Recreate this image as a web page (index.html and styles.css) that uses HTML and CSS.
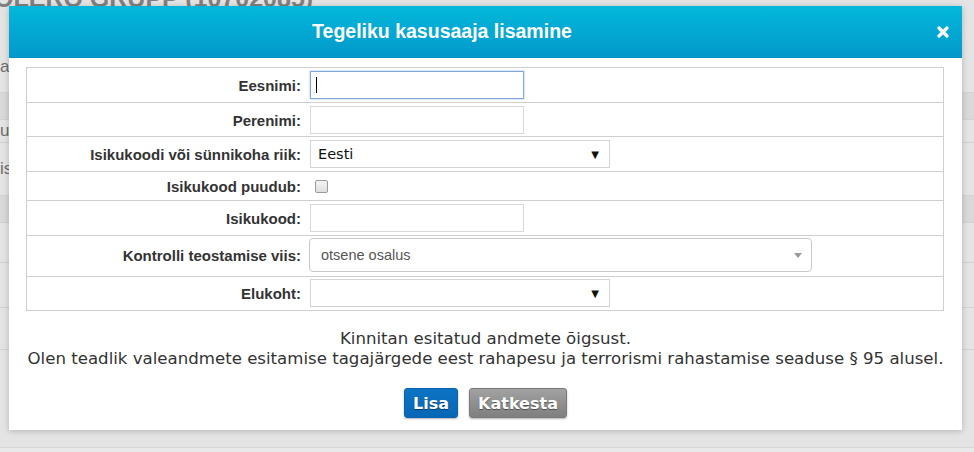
FILE: index.html
```html
<!DOCTYPE html>
<html lang="et">
<head>
<meta charset="utf-8">
<title>Tegeliku kasusaaja lisamine</title>
<link rel="stylesheet" href="styles.css">
</head>
<body>
<div class="page">
  <h1 class="page-title">OLERO GRUPP (10702085)</h1>
  <p class="page-sub">acsaajad</p>
  <div class="page-rows">
    <div class="prow prow-head"></div>
    <div class="prow prow-a"><span>udmed</span></div>
    <div class="prow prow-b"><span>isik</span></div>
    <div class="prow prow-head"></div>
    <div class="prow prow-c"></div>
    <div class="prow prow-d"></div>
    <div class="prow prow-e"></div>
    <div class="prow prow-f"></div>
  </div>
  <div class="page-foot"></div>
</div>

<div class="modal">
  <div class="modal-header">
    <div class="modal-title">Tegeliku kasusaaja lisamine</div>
    <svg class="modal-close" width="12" height="12" viewBox="0 0 12 12"><path d="M2 2 L10 10 M10 2 L2 10" stroke="#fff" stroke-width="3.2" stroke-linecap="round"/></svg>
  </div>
  <div class="modal-body">
    <div class="form-table">
      <div class="frow r33">
        <label class="flabel">Eesnimi:</label>
        <span class="caret-wrap"><input class="finput focused" type="text"></span>
      </div>
      <div class="frow r32">
        <label class="flabel">Perenimi:</label>
        <input class="finput" type="text">
      </div>
      <div class="frow r33">
        <label class="flabel">Isikukoodi või sünnikoha riik:</label>
        <span class="fselect"><span class="fselect-text">Eesti</span><span class="fselect-arrow">▼</span></span>
      </div>
      <div class="frow rcheck">
        <label class="flabel">Isikukood puudub:</label>
        <input class="fcheck" type="checkbox">
      </div>
      <div class="frow r33">
        <label class="flabel">Isikukood:</label>
        <input class="finput" type="text">
      </div>
      <div class="frow rtall">
        <label class="flabel">Kontrolli teostamise viis:</label>
        <span class="fselect2"><span class="fselect2-text">otsene osalus</span><span class="fselect2-arrow"></span></span>
      </div>
      <div class="frow r23">
        <label class="flabel">Elukoht:</label>
        <span class="fselect"><span class="fselect-text"></span><span class="fselect-arrow">▼</span></span>
      </div>
    </div>
    <p class="notice">Kinnitan esitatud andmete õigsust.<br>Olen teadlik valeandmete esitamise tagajärgede eest rahapesu ja terrorismi rahastamise seaduse § 95 alusel.</p>
    <div class="actions">
      <button class="btn btn-primary">Lisa</button>
      <button class="btn btn-grey">Katkesta</button>
    </div>
  </div>
</div>
</body>
</html>
```

FILE: styles.css
```css
html, body {
  margin: 0;
  padding: 0;
}
body {
  width: 974px;
  height: 452px;
  overflow: hidden;
  background: #e4e4e4;
  font-family: "Liberation Sans", Arial, sans-serif;
  color: #333;
}

/* background page (dimmed) */
.page {
  height: 452px;
  display: flex;
  flex-direction: column;
}
.page-title {
  margin: -14px 0 0 -6px;
  font-size: 25px;
  line-height: 25px;
  font-weight: bold;
  color: #808080;
  white-space: nowrap;
}
.page-sub {
  margin: 45px 0 0 0;
  height: 22px;
  font-size: 17px;
  line-height: 22px;
  color: #6e6e6e;
}
.page-rows {
  margin-top: 14px;
  border-top: 1px solid #d2d2d2;
}
.prow {
  border-bottom: 1px solid #d2d2d2;
  font-size: 17px;
  color: #6e6e6e;
  display: flex;
  align-items: center;
}
.prow-head { height: 26px; background: #d9d9d9; }
.prow-a { height: 22px; }
.prow-b { height: 52px; }
.prow-c { height: 39px; }
.prow-d { height: 44px; }
.prow-e { height: 41px; }
.prow-f { height: 97px; border-bottom: 1px solid #d6d6d6; }
.page-foot { flex: 1; background: #e9e9e9; }

/* modal */
.modal {
  position: absolute;
  left: 9px;
  top: 6px;
  width: 953px;
  height: 424px;
  background: #fff;
  box-shadow: 0 1px 6px rgba(0, 0, 0, 0.22);
}
.modal-header {
  height: 52px;
  background: linear-gradient(#03b8db, #0399ca);
  border-bottom: 1px solid #0592c0;
  box-sizing: border-box;
  display: flex;
  align-items: center;
  padding-right: 13px;
}
.modal-title {
  flex: 1;
  text-align: center;
  color: #fff;
  font-weight: bold;
  font-size: 19.5px;
}
.modal-close {
  margin-left: 62px;
  display: block;
}
.modal-body {
  padding: 9px 17px 0 17px;
}

.form-table {
  width: 918px;
  box-sizing: border-box;
  border: 1px solid #cfcfcf;
  border-bottom: none;
}
.frow {
  display: flex;
  align-items: center;
  border-bottom: 1px solid #cfcfcf;
}
.r33 { padding: 3px 0 3px; }
.r32 { padding: 3px 0 2px; }
.r23 { padding: 2px 0 3px; }
.rcheck { height: 28px; }
.rtall { padding: 2px 0 4px; }
.flabel {
  width: 274px;
  text-align: right;
  font-weight: bold;
  font-size: 15px;
  color: #333;
  margin-right: 9px;
  white-space: nowrap;
}
.finput {
  display: block;
  width: 214px;
  height: 28px;
  box-sizing: border-box;
  border: 1px solid #d8d8d8;
  margin: 0;
  padding: 0 6px;
  font-size: 15px;
  font-family: "DejaVu Sans", Verdana, sans-serif;
  outline: none;
}
.finput.focused {
  border-color: #80a8dc;
  box-shadow: 0 0 2px rgba(80, 130, 210, 0.55);
}
.caret-wrap {
  position: relative;
  display: block;
}
.caret-wrap::after {
  content: "";
  position: absolute;
  left: 6px;
  top: 6px;
  width: 1px;
  height: 16px;
  background: #000;
}
.fselect {
  width: 300px;
  height: 28px;
  box-sizing: border-box;
  border: 1px solid #d4d4d4;
  display: flex;
  align-items: center;
  justify-content: space-between;
  padding: 0 10px 0 7px;
  font-family: "DejaVu Sans", Verdana, sans-serif;
  font-size: 14.5px;
  color: #111;
}
.fselect-arrow {
  font-size: 10px;
  color: #111;
}
.fcheck {
  appearance: none;
  -webkit-appearance: none;
  width: 13px;
  height: 13px;
  margin: 0 0 0 5px;
  box-sizing: border-box;
  border: 1px solid #9a9a9a;
  border-radius: 2px;
  background: linear-gradient(#f4f4f4, #dedede);
}
.fselect2 {
  margin-left: -1px;
  width: 503px;
  height: 34px;
  box-sizing: border-box;
  border: 1px solid #c8c8c8;
  border-radius: 4px;
  display: flex;
  align-items: center;
  justify-content: space-between;
  padding: 0 9px 0 11px;
  font-size: 14.5px;
  color: #555;
}
.fselect2-arrow {
  width: 0;
  height: 0;
  border-left: 4px solid transparent;
  border-right: 4px solid transparent;
  border-top: 5px solid #999;
}

.notice {
  margin: 18px 0 0 0;
  text-align: center;
  font-family: "DejaVu Sans", Verdana, sans-serif;
  font-size: 16.6px;
  line-height: 20px;
  color: #333;
  white-space: nowrap;
}
.actions {
  display: flex;
  justify-content: center;
  gap: 11px;
  margin-top: 19px;
}
.btn {
  height: 30px;
  box-sizing: border-box;
  padding: 0 8px;
  border-radius: 3px;
  font-family: "DejaVu Sans", Verdana, sans-serif;
  font-weight: bold;
  font-size: 16px;
  color: #fff;
  text-shadow: 0 1px 1px rgba(0, 0, 0, 0.45);
  box-shadow: 0 1px 2px rgba(0, 0, 0, 0.3);
  cursor: pointer;
}
.btn-primary {
  background: linear-gradient(#0c74c3, #0767b6);
  border: 1px solid #0862ae;
}
.btn-grey {
  background: linear-gradient(#a2a2a2, #7f7f7f);
  border: 1px solid #7a7a7a;
}
```
